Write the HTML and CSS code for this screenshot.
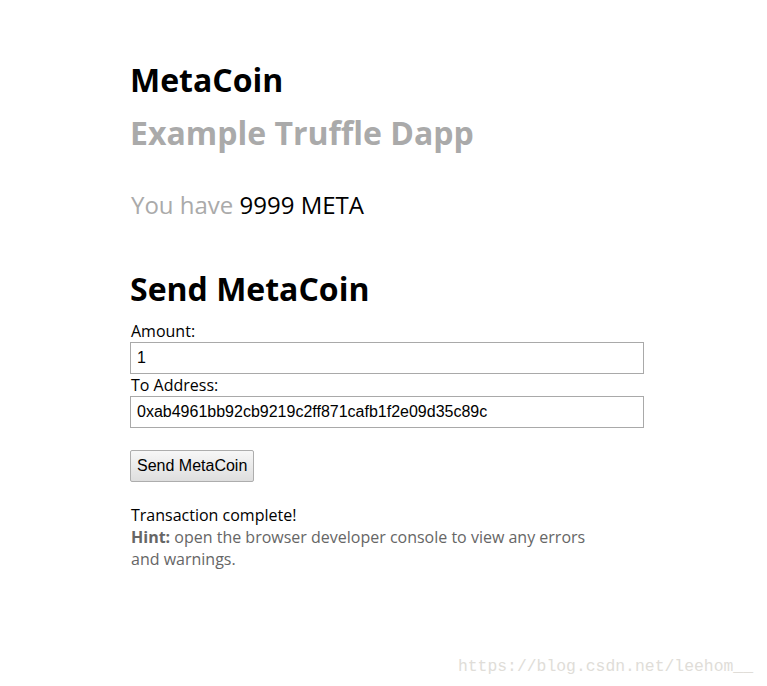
FILE: index.html
```html
<!DOCTYPE html>
<html lang="en">
<head>
    <meta charset="UTF-8">
    <meta name="viewport" content="width=device-width, initial-scale=1.0">
    <title>MetaCoin - Truffle Webpack Demo w/ Frontend</title>
    <link rel="stylesheet" href="styles.css">
</head>
<body>
    <div class="container">
        <h1>MetaCoin</h1>
        <h2 class="subtitle">Example Truffle Dapp</h2>
        <h3 class="balance">You have <span class="black" id="balance">9999</span> <span class="black">META</span></h3>

        <h1 class="send-title">Send MetaCoin</h1>
        <label for="amount">Amount:</label>
        <input type="text" id="amount" value="1">
        <label for="receiver">To Address:</label>
        <input type="text" id="receiver" value="0xab4961bb92cb9219c2ff871cafb1f2e09d35c89c">
        <button id="send">Send MetaCoin</button>

        <p id="status">Transaction complete!</p>
        <p class="hint"><strong>Hint:</strong> open the browser developer console to view any errors and warnings.</p>
    </div>
    <div class="watermark">https://blog.csdn.net/leehom__</div>
</body>
</html>
```

FILE: styles.css
```css
body {
    font-family: "Open Sans", sans-serif;
    color: #000;
    background: #fff;
    margin: 0;
    height: 686px;
    position: relative;
    overflow: hidden;
}
.container {
    width: 513px;
    margin-left: 131px;
    padding-top: 58px;
}
h1, h2, h3, p {
    margin: 0;
}
h1 {
    font-size: 32px;
    line-height: 44px;
    font-weight: 700;
    margin-left: -1px;
}
.subtitle {
    font-size: 32px;
    line-height: 44px;
    font-weight: 700;
    color: #aaaaaa;
    margin-top: 9px;
    margin-left: -1px;
}
.balance {
    font-size: 24px;
    line-height: 32px;
    font-weight: 400;
    color: #aaaaaa;
    margin-top: 34px;
}
.black {
    color: #000;
}
.send-title {
    margin-top: 46px;
}
label {
    display: block;
    font-size: 16px;
    line-height: 22px;
    margin-top: 9px;
}
label + input + label {
    margin-top: 0;
}
input {
    display: block;
    box-sizing: border-box;
    width: 514px;
    height: 32px;
    margin: 0 0 0 -1px;
    padding: 0 6px;
    border: 1px solid #a9a9a9;
    font-family: "Liberation Sans", Arial, sans-serif;
    font-size: 16px;
    color: #000;
}
button {
    display: block;
    box-sizing: border-box;
    height: 32px;
    margin: 22px 0 0 -1px;
    padding: 0 6px;
    border: 1px solid #adadad;
    border-radius: 2px;
    background: linear-gradient(#f7f7f7, #dedede);
    font-family: "Liberation Sans", Arial, sans-serif;
    font-size: 16px;
    color: #000;
}
#status {
    font-size: 16px;
    line-height: 22px;
    margin-top: 22px;
}
.hint {
    width: 470px;
    font-size: 16px;
    line-height: 22px;
    color: #666;
}
.hint strong {
    font-weight: 700;
}
.watermark {
    position: absolute;
    right: 14px;
    bottom: 10px;
    font-family: "Liberation Mono", monospace;
    font-size: 16.4px;
    color: #e0ddd8;
}
```
